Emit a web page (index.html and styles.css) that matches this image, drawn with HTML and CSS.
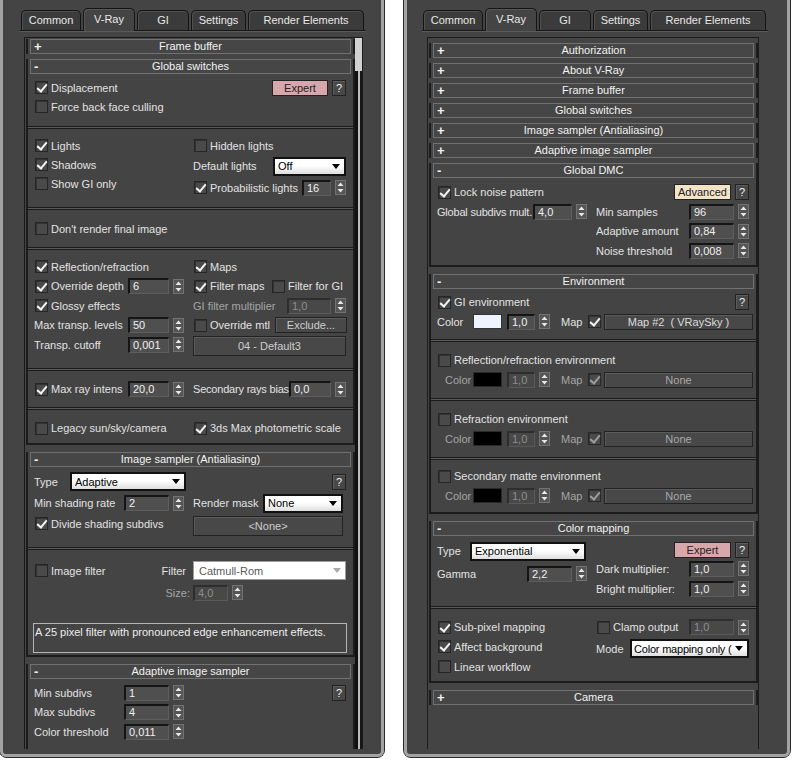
FILE: index.html
```html
<!DOCTYPE html>
<html lang="en">
<head>
<meta charset="UTF-8">
<title>V-Ray render setup</title>
<link rel="stylesheet" href="styles.css">
</head>
<body>

<!-- left window: global switches / image sampler -->
<div class="win l">
<div class="win-in">
<div class="tabs">
<div class="tab w60">Common</div>
<div class="tab act w52">V-Ray</div>
<div class="tab w52">GI</div>
<div class="tab w55">Settings</div>
<div class="tab w116">Render Elements</div>
</div>
<div class="frame">
<div class="content">

<div class="ro"><div class="hd"><b>+</b><span>Frame buffer</span></div></div>

<div class="ro open">
<div class="hd"><b>-</b><span>Global switches</span></div>
<div class="grp pt4 pb10">
<div class="c1">
<div class="rw"><i class="cb on"></i><span class="lb">Displacement</span></div>
<div class="rw"><i class="cb"></i><span class="lb">Force back face culling</span></div>
</div>
<div class="c2">
<div class="rw end"><span class="btn pink w56">Expert</span><span class="btn q">?</span></div>
</div>
</div>
<div class="sep"></div>
<div class="grp pt7 pb9">
<div class="c1">
<div class="rw"><i class="cb on"></i><span class="lb">Lights</span></div>
<div class="rw"><i class="cb on"></i><span class="lb">Shadows</span></div>
<div class="rw"><i class="cb"></i><span class="lb">Show GI only</span></div>
</div>
<div class="c2">
<div class="rw"><i class="cb"></i><span class="lb">Hidden lights</span></div>
<div class="rw h22"><span class="lb">Default lights</span><span class="dd w73"><span class="ddt">Off</span><svg viewBox="0 0 8 5"><path d="M0 0h8L4 5z"/></svg></span></div>
<div class="rw h21"><i class="cb on"></i><span class="lb">Probabilistic lights</span><span class="spin"><span class="fld w29">16</span><svg class="arw" viewBox="0 0 9 13"><path d="M4.5 1.5L7.5 5h-6zM4.5 11.5L1.5 8h6z"/></svg></span></div>
</div>
</div>
<div class="sep"></div>
<div class="grp pt9 pb9">
<div class="c1">
<div class="rw"><i class="cb"></i><span class="lb">Don't render final image</span></div>
</div>
</div>
<div class="sep"></div>
<div class="grp pt7 pb12">
<div class="c1">
<div class="rw h195"><i class="cb on"></i><span class="lb">Reflection/refraction</span></div>
<div class="rw h195"><i class="cb on"></i><span class="lb">Override depth</span><span class="spin mr9"><span class="fld w41">6</span><svg class="arw" viewBox="0 0 9 13"><path d="M4.5 1.5L7.5 5h-6zM4.5 11.5L1.5 8h6z"/></svg></span></div>
<div class="rw h195"><i class="cb on"></i><span class="lb">Glossy effects</span></div>
<div class="rw h195"><span class="lb">Max transp. levels</span><span class="spin mr9"><span class="fld w41">50</span><svg class="arw" viewBox="0 0 9 13"><path d="M4.5 1.5L7.5 5h-6zM4.5 11.5L1.5 8h6z"/></svg></span></div>
<div class="rw h195"><span class="lb">Transp. cutoff</span><span class="spin mr9"><span class="fld w41">0,001</span><svg class="arw" viewBox="0 0 9 13"><path d="M4.5 1.5L7.5 5h-6zM4.5 11.5L1.5 8h6z"/></svg></span></div>
</div>
<div class="c2">
<div class="rw h195"><i class="cb on"></i><span class="lb">Maps</span></div>
<div class="rw h195"><i class="cb on"></i><span class="w61">Filter maps</span><i class="cb"></i><span class="lb">Filter for GI</span></div>
<div class="rw h195"><span class="lb dim">GI filter multiplier</span><span class="spin off"><span class="fld w44">1,0</span><svg class="arw" viewBox="0 0 9 13"><path d="M4.5 1.5L7.5 5h-6zM4.5 11.5L1.5 8h6z"/></svg></span></div>
<div class="rw h195"><i class="cb"></i><span class="lb">Override mtl</span><span class="btn w72 mrn1">Exclude...</span></div>
<div class="btn wide h20 mt1">04 - Default3</div>
</div>
</div>
<div class="sep"></div>
<div class="grp pt85 pb8">
<div class="c1">
<div class="rw h195"><i class="cb on"></i><span class="lb">Max ray intens</span><span class="spin mr9"><span class="fld w41">20,0</span><svg class="arw" viewBox="0 0 9 13"><path d="M4.5 1.5L7.5 5h-6zM4.5 11.5L1.5 8h6z"/></svg></span></div>
</div>
<div class="c2">
<div class="rw h195"><span class="lb tight">Secondary rays bias</span><span class="spin"><span class="fld w42">0,0</span><svg class="arw" viewBox="0 0 9 13"><path d="M4.5 1.5L7.5 5h-6zM4.5 11.5L1.5 8h6z"/></svg></span></div>
</div>
</div>
<div class="sep"></div>
<div class="grp pt85 pb5">
<div class="c1">
<div class="rw h195"><i class="cb"></i><span class="lb">Legacy sun/sky/camera</span></div>
</div>
<div class="c2">
<div class="rw h195"><i class="cb on"></i><span class="lb">3ds Max photometric scale</span></div>
</div>
</div>
</div>

<div class="ro open">
<div class="hd"><b>-</b><span>Image sampler (Antialiasing)</span></div>
<div class="grp pt4 pb11">
<div class="c1">
<div class="rw h21"><span class="w36">Type</span><span class="dd w116"><span class="ddt">Adaptive</span><svg viewBox="0 0 8 5"><path d="M0 0h8L4 5z"/></svg></span></div>
<div class="rw h22"><span class="lb">Min shading rate</span><span class="spin mr9"><span class="fld w45">2</span><svg class="arw" viewBox="0 0 9 13"><path d="M4.5 1.5L7.5 5h-6zM4.5 11.5L1.5 8h6z"/></svg></span></div>
<div class="rw"><i class="cb on"></i><span class="lb">Divide shading subdivs</span></div>
</div>
<div class="c2">
<div class="rw h21 end"><span class="btn q">?</span></div>
<div class="rw h22"><span class="lb">Render mask</span><span class="dd w80 mr3"><span class="ddt">None</span><svg viewBox="0 0 8 5"><path d="M0 0h8L4 5z"/></svg></span></div>
<div class="btn w150 h20 mt2">&lt;None&gt;</div>
</div>
</div>
<div class="sep"></div>
<div class="grp col pt10 pb2">
<div class="rw h21">
<span class="c1 in"><i class="cb"></i><span class="lb">Image filter</span><span class="flab">Filter</span></span>
<span class="dd off w153"><span class="ddt">Catmull-Rom</span><svg viewBox="0 0 8 5"><path d="M0 0h8L4 5z"/></svg></span>
</div>
<div class="rw mt2">
<span class="c1 lbr dim">Size:</span>
<span class="spin off"><span class="fld w35">4,0</span><svg class="arw" viewBox="0 0 9 13"><path d="M4.5 1.5L7.5 5h-6zM4.5 11.5L1.5 8h6z"/></svg></span>
</div>
<div class="desc">A 25 pixel filter with pronounced edge enhancement effects.</div>
</div>
</div>

<div class="ro open">
<div class="hd"><b>-</b><span>Adaptive image sampler</span></div>
<div class="grp pt4 pb8">
<div class="c1">
<div class="rw h195"><span class="lb">Min subdivs</span><span class="spin mr9"><span class="fld w45">1</span><svg class="arw" viewBox="0 0 9 13"><path d="M4.5 1.5L7.5 5h-6zM4.5 11.5L1.5 8h6z"/></svg></span></div>
<div class="rw h195"><span class="lb">Max subdivs</span><span class="spin mr9"><span class="fld w45">4</span><svg class="arw" viewBox="0 0 9 13"><path d="M4.5 1.5L7.5 5h-6zM4.5 11.5L1.5 8h6z"/></svg></span></div>
<div class="rw h195"><span class="lb">Color threshold</span><span class="spin mr9"><span class="fld w45">0,011</span><svg class="arw" viewBox="0 0 9 13"><path d="M4.5 1.5L7.5 5h-6zM4.5 11.5L1.5 8h6z"/></svg></span></div>
</div>
<div class="c2">
<div class="rw h195 end"><span class="btn q">?</span></div>
</div>
</div>
</div>

</div>
<div class="scroll"></div>
</div>
</div>
</div>

<!-- right window: DMC / environment / color mapping -->
<div class="win r">
<div class="win-in">
<div class="tabs">
<div class="tab w60">Common</div>
<div class="tab act w52">V-Ray</div>
<div class="tab w52">GI</div>
<div class="tab w55">Settings</div>
<div class="tab w116">Render Elements</div>
</div>
<div class="frame">
<div class="content">

<div class="ro"><div class="hd"><b>+</b><span>Authorization</span></div></div>
<div class="ro"><div class="hd"><b>+</b><span>About V-Ray</span></div></div>
<div class="ro"><div class="hd"><b>+</b><span>Frame buffer</span></div></div>
<div class="ro"><div class="hd"><b>+</b><span>Global switches</span></div></div>
<div class="ro"><div class="hd"><b>+</b><span>Image sampler (Antialiasing)</span></div></div>
<div class="ro"><div class="hd"><b>+</b><span>Adaptive image sampler</span></div></div>

<div class="ro open">
<div class="hd"><b>-</b><span>Global DMC</span></div>
<div class="grp pt45 pb4">
<div class="c1">
<div class="rw h195"><i class="cb on"></i><span class="lb">Lock noise pattern</span></div>
<div class="rw h195"><span class="lb tight">Global subdivs mult.</span><span class="spin mr9"><span class="fld w39">4,0</span><svg class="arw" viewBox="0 0 9 13"><path d="M4.5 1.5L7.5 5h-6zM4.5 11.5L1.5 8h6z"/></svg></span></div>
</div>
<div class="c2">
<div class="rw h195 end"><span class="btn cream w57">Advanced</span><span class="btn q">?</span></div>
<div class="rw h195"><span class="lb">Min samples</span><span class="spin"><span class="fld w45">96</span><svg class="arw" viewBox="0 0 9 13"><path d="M4.5 1.5L7.5 5h-6zM4.5 11.5L1.5 8h6z"/></svg></span></div>
<div class="rw h195"><span class="lb">Adaptive amount</span><span class="spin"><span class="fld w45">0,84</span><svg class="arw" viewBox="0 0 9 13"><path d="M4.5 1.5L7.5 5h-6zM4.5 11.5L1.5 8h6z"/></svg></span></div>
<div class="rw h195"><span class="lb">Noise threshold</span><span class="spin"><span class="fld w45">0,008</span><svg class="arw" viewBox="0 0 9 13"><path d="M4.5 1.5L7.5 5h-6zM4.5 11.5L1.5 8h6z"/></svg></span></div>
</div>
</div>
</div>

<div class="ro open">
<div class="hd"><b>-</b><span>Environment</span></div>
<div class="grp col pt4 pb7">
<div class="rw"><i class="cb on"></i><span class="lb">GI environment</span><span class="btn q">?</span></div>
<div class="rw h20">
<span class="clbl">Color</span><span class="sw lt"></span>
<span class="spin ml5"><span class="fld w28">1,0</span><svg class="arw" viewBox="0 0 9 13"><path d="M4.5 1.5L7.5 5h-6zM4.5 11.5L1.5 8h6z"/></svg></span>
<span class="mlbl">Map</span><i class="cb on"></i><span class="btn mapb">Map #2&nbsp;&nbsp;( VRaySky )</span>
</div>
</div>
<div class="sep"></div>
<div class="grp col pt9 pb8">
<div class="rw"><i class="cb"></i><span class="lb">Reflection/refraction environment</span></div>
<div class="rw h20 crow">
<span class="clbl">Color</span><span class="sw"></span>
<span class="spin off ml5"><span class="fld w28">1,0</span><svg class="arw" viewBox="0 0 9 13"><path d="M4.5 1.5L7.5 5h-6zM4.5 11.5L1.5 8h6z"/></svg></span>
<span class="mlbl">Map</span><i class="cb on dim"></i><span class="btn mapb">None</span>
</div>
</div>
<div class="sep"></div>
<div class="grp col pt9 pb8">
<div class="rw"><i class="cb"></i><span class="lb">Refraction environment</span></div>
<div class="rw h20 crow">
<span class="clbl">Color</span><span class="sw"></span>
<span class="spin off ml5"><span class="fld w28">1,0</span><svg class="arw" viewBox="0 0 9 13"><path d="M4.5 1.5L7.5 5h-6zM4.5 11.5L1.5 8h6z"/></svg></span>
<span class="mlbl">Map</span><i class="cb on dim"></i><span class="btn mapb">None</span>
</div>
</div>
<div class="sep"></div>
<div class="grp col pt7 pb6">
<div class="rw"><i class="cb"></i><span class="lb">Secondary matte environment</span></div>
<div class="rw h20 crow">
<span class="clbl">Color</span><span class="sw"></span>
<span class="spin off ml5"><span class="fld w28">1,0</span><svg class="arw" viewBox="0 0 9 13"><path d="M4.5 1.5L7.5 5h-6zM4.5 11.5L1.5 8h6z"/></svg></span>
<span class="mlbl">Map</span><i class="cb on dim"></i><span class="btn mapb">None</span>
</div>
</div>
</div>

<div class="ro open">
<div class="hd"><b>-</b><span>Color mapping</span></div>
<div class="grp pt5 pb7">
<div class="c1">
<div class="rw h21"><span class="w33">Type</span><span class="dd w116"><span class="ddt">Exponential</span><svg viewBox="0 0 8 5"><path d="M0 0h8L4 5z"/></svg></span></div>
<div class="rw h20 mt2"><span class="lb">Gamma</span><span class="spin mr9"><span class="fld w45">2,2</span><svg class="arw" viewBox="0 0 9 13"><path d="M4.5 1.5L7.5 5h-6zM4.5 11.5L1.5 8h6z"/></svg></span></div>
</div>
<div class="c2">
<div class="rw h18 end"><span class="btn pink w57">Expert</span><span class="btn q">?</span></div>
<div class="rw h20"><span class="lb">Dark multiplier:</span><span class="spin"><span class="fld w45">1,0</span><svg class="arw" viewBox="0 0 9 13"><path d="M4.5 1.5L7.5 5h-6zM4.5 11.5L1.5 8h6z"/></svg></span></div>
<div class="rw h20"><span class="lb">Bright multiplier:</span><span class="spin"><span class="fld w45">1,0</span><svg class="arw" viewBox="0 0 9 13"><path d="M4.5 1.5L7.5 5h-6zM4.5 11.5L1.5 8h6z"/></svg></span></div>
</div>
</div>
<div class="sep"></div>
<div class="grp pt9 pb4">
<div class="c1">
<div class="rw"><i class="cb on"></i><span class="lb">Sub-pixel mapping</span></div>
<div class="rw h20"><i class="cb on"></i><span class="lb">Affect background</span></div>
<div class="rw h20"><i class="cb"></i><span class="lb">Linear workflow</span></div>
</div>
<div class="c2">
<div class="rw"><i class="cb"></i><span class="lb">Clamp output</span><span class="spin off"><span class="fld w45">1,0</span><svg class="arw" viewBox="0 0 9 13"><path d="M4.5 1.5L7.5 5h-6zM4.5 11.5L1.5 8h6z"/></svg></span></div>
<div class="rw h24"><span class="lb">Mode</span><span class="dd w119 tight"><span class="ddt">Color mapping only (</span><svg viewBox="0 0 8 5"><path d="M0 0h8L4 5z"/></svg></span></div>
</div>
</div>
</div>

<div class="ro"><div class="hd"><b>+</b><span>Camera</span></div></div>

</div>
</div>
</div>
</div>

</body>
</html>
```

FILE: styles.css
```css
* {
box-sizing: border-box;
}
body {
margin: 0;
background-color: #fff;
display: flex;
align-items: flex-start;
font-family: "Liberation Sans", Arial, sans-serif;
font-size: 11px;
color: #e2e2e2;
}

/* window frames */
.win {
height: 758px;
background-color: #444;
border: 1px solid #2b2b2b;
border-top: 0;
border-radius: 0 0 8px 8px;
}
.win.l {
width: 386px;
margin-left: -1px;
}
.win.r {
width: 388px;
margin-left: 18px;
}
.win-in {
height: 100%;
border: 3px solid #a3a3a3;
border-top: 0;
border-radius: 0 0 6px 6px;
}

/* tabs */
.tabs {
display: flex;
align-items: flex-end;
gap: 2px;
width: 346px;
height: 31px;
margin-left: 17px;
padding-left: 1px;
border-bottom: 1px solid #181818;
box-shadow: 0 1px 0 #5a5a5a;
}
.r .tabs {
margin-left: 15px;
}
.tab {
flex: none;
height: 20px;
line-height: 18px;
text-align: center;
background-color: #3b3b3b;
border: 1px solid #141414;
border-bottom: 0;
border-radius: 5px 5px 0 0;
box-shadow: inset 1px 1px 0 #505050;
color: #e8e8e8;
}
.tab.act {
height: 23px;
margin-bottom: -1px;
line-height: 20px;
background-color: #444;
box-shadow: inset 1px 1px 0 #585858;
}

/* sunken rollout frame */
.frame {
display: flex;
width: 339px;
height: 712px;
margin: 6px 0 0 21px;
border: 1px solid #1b1b1b;
border-bottom: 0;
overflow: hidden;
}
.r .frame {
width: 332px;
margin-left: 20px;
}
.content {
width: 330px;
flex: none;
padding-top: 1px;
}
.r .content {
padding-top: 5px;
}
.scroll {
width: 7px;
flex: none;
background:
linear-gradient(#d2d2d2, #d2d2d2) 0 0 / 100% 33px no-repeat,
linear-gradient(to right, #111 3px, #bdbdbd 3px, #bdbdbd 5px, #161616 5px);
}

/* rollouts */
.ro {
width: 329px;
margin: 0 0 5px 1px;
border-left: 2px solid #1c1c1c;
border-right: 2px solid #1c1c1c;
}
.ro.open {
margin-bottom: 7px;
border-bottom: 2px solid #1c1c1c;
}
.hd {
display: grid;
grid-template-columns: 16px 1fr 16px;
align-items: center;
height: 15px;
margin: 0 2px;
border: 1px solid #717171;
background-color: #464646;
color: #f2f2f2;
}
.hd b {
padding-left: 3px;
font-size: 13px;
line-height: 13px;
}
.hd span {
text-align: center;
line-height: 13px;
}
.sep {
height: 3px;
border-top: 1px solid #1a1a1a;
border-bottom: 1px solid #1a1a1a;
background-color: #5a5a5a;
}

/* groups and rows */
.grp {
display: flex;
padding: 0 7px 0 6px;
}
.grp.col {
flex-direction: column;
}
.c1 {
width: 159px;
flex: none;
}
.c2 {
flex: 1;
min-width: 0;
}
.rw {
display: flex;
align-items: center;
height: 19px;
white-space: nowrap;
}
.rw.end {
justify-content: flex-end;
gap: 4px;
}
.c1.in {
display: flex;
align-items: center;
}
.lb {
flex: 1;
min-width: 0;
overflow: hidden;
}
.lbr {
text-align: right;
padding-right: 3px;
}
.flab {
margin-right: 7px;
}
.tight {
letter-spacing: -0.2px;
}
.dim {
color: #a4a4a4;
}

.pt4 { padding-top: 4px; }
.pt45 { padding-top: 4.5px; }
.pt5 { padding-top: 5px; }
.pt7 { padding-top: 7px; }
.pt85 { padding-top: 8.5px; }
.pt9 { padding-top: 9px; }
.pt10 { padding-top: 10px; }
.pb2 { padding-bottom: 2px; }
.pb4 { padding-bottom: 4px; }
.pb5 { padding-bottom: 5px; }
.pb6 { padding-bottom: 6px; }
.pb7 { padding-bottom: 7px; }
.pb8 { padding-bottom: 8px; }
.pb9 { padding-bottom: 9px; }
.pb10 { padding-bottom: 10px; }
.pb11 { padding-bottom: 11px; }
.pb12 { padding-bottom: 12px; }
.mt1 { margin-top: 1px; }
.mt2 { margin-top: 2px; }
.mr3 { margin-right: 3px; }
.mr9 { margin-right: 9px; }
.ml5 { margin-left: 5px; }
.mrn1 { margin-right: -1px; }
.h18 { height: 18px; }
.h195 { height: 19.5px; }
.h20 { height: 20px; }
.h21 { height: 21px; }
.h22 { height: 22px; }
.h24 { height: 24px; }

.w28 { width: 28px; }
.w29 { width: 29px; }
.w33 { width: 33px; flex: none; }
.w35 { width: 35px; }
.w36 { width: 36px; flex: none; }
.w39 { width: 39px; }
.w41 { width: 41px; }
.w42 { width: 42px; }
.w44 { width: 44px; }
.w45 { width: 45px; }
.w52 { width: 52px; }
.w55 { width: 55px; }
.w56 { width: 56px; }
.w57 { width: 57px; }
.w60 { width: 60px; }
.w61 { width: 61px; flex: none; }
.w72 { width: 72px; }
.w73 { width: 73px; }
.w80 { width: 80px; }
.w116 { width: 116px; }
.w119 { width: 119px; }
.w150 { width: 150px; }
.w153 { width: 153px; }

/* checkbox */
.cb {
position: relative;
flex: none;
width: 13px;
height: 13px;
margin: 0 3px 0 1px;
background-color: #4a4a4a;
border: 1px solid #262626;
box-shadow: inset 1px 1px 0 #323232;
}
.cb.on::after {
content: "";
position: absolute;
left: 3px;
top: 0;
width: 4px;
height: 8px;
border: solid #f4f4f4;
border-width: 0 2px 2px 0;
transform: rotate(40deg);
}
.cb.dim::after {
border-color: #9c9c9c;
}

/* spinner */
.spin {
display: flex;
align-items: center;
gap: 4px;
flex: none;
}
.fld {
height: 16px;
padding-left: 3px;
line-height: 13px;
background-color: #4f4f4f;
border-top: 2px solid #151515;
border-left: 2px solid #151515;
border-right: 1px solid #5e5e5e;
border-bottom: 1px solid #5e5e5e;
color: #f0f0f0;
overflow: hidden;
}
.arw {
width: 11px;
height: 15px;
background-color: #555;
border: 1px solid #727272;
fill: #e8e8e8;
}
.spin.off .fld {
background-color: #484848;
border-color: #2e2e2e #5a5a5a #5a5a5a #2e2e2e;
color: #8e8e8e;
}

/* dropdown */
.dd {
display: flex;
align-items: center;
flex: none;
height: 19px;
padding: 0 4px 0 3px;
background: linear-gradient(#fff 45%, #dedede);
border: 2px solid #111;
color: #000;
}
.ddt {
flex: 1;
min-width: 0;
overflow: hidden;
white-space: nowrap;
}
.dd svg {
flex: none;
width: 8px;
height: 5px;
margin-left: 2px;
fill: #000;
}
.dd.w119 {
padding-left: 2px;
}
.dd.off {
border: 1px solid #9c9c9c;
background: #fff;
color: #5a5a5a;
padding-left: 5px;
}
.dd.off svg {
fill: #aaa;
}

/* buttons */
.btn {
display: flex;
align-items: center;
justify-content: center;
flex: none;
height: 16px;
background-color: #484848;
border: 1px solid #222;
box-shadow: inset 1px 1px 0 #5c5c5c;
color: #cdcdcd;
}
.btn.q {
width: 14px;
color: #eee;
}
.btn.wide {
width: 153px;
}
.btn.h20 {
height: 20px;
}
.btn.pink {
background-color: #d8a7ab;
box-shadow: none;
color: #222;
}
.btn.cream {
background-color: #f3e4c7;
box-shadow: none;
color: #222;
}
.rw .btn.q:last-child {
margin-left: auto;
}
.rw.end .btn.q:last-child {
margin-left: 0;
}

/* environment colour rows */
.clbl {
width: 36px;
flex: none;
}
.crow .clbl {
padding-left: 8px;
color: #a4a4a4;
}
.crow .mlbl {
color: #a4a4a4;
}
.sw {
flex: none;
width: 29px;
height: 15px;
background-color: #000;
border: 1px solid #2a2a2a;
}
.sw.lt {
background-color: #eef3ff;
border-color: #333;
}
.mlbl {
width: 26px;
margin-left: 11px;
flex: none;
}
.mapb {
flex: 1;
margin: 0 -4px 0 0;
color: #dcdcdc;
}
.crow .mapb {
color: #a8a8a8;
}

/* filter description */
.desc {
height: 30px;
margin: 21px -1px 0;
padding: 1px;
line-height: 14px;
border: 1px solid #b4b4b4;
color: #eee;
}
```
